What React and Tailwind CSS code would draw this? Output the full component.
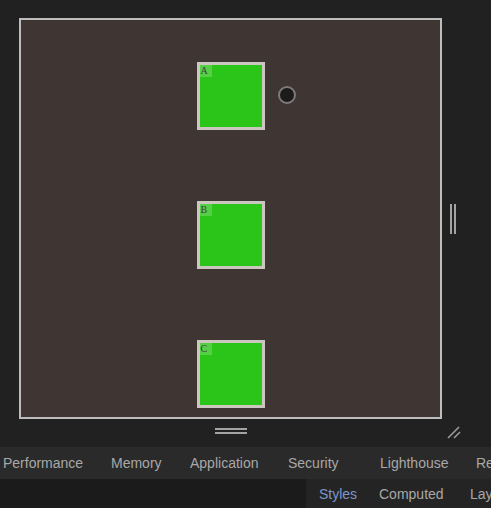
export default function App() {
  const boxes = ["A", "B", "C"]
  const tabs = [
    { label: "Performance", w: "w-[108px]" },
    { label: "Memory", w: "w-[79px]" },
    { label: "Application", w: "w-[98px]" },
    { label: "Security", w: "w-[92px]" },
    { label: "Lighthouse", w: "w-[96px]" },
    { label: "Recorder", w: "w-[90px]" },
  ]

  return (
    <div className="w-[491px] h-[508px] overflow-hidden bg-[#212121] font-['Liberation_Sans',Arial,sans-serif]">
      {/* Viewport area */}
      <div className="h-[447px] pt-[18px] pl-[19px] bg-[#212121]">
        <div className="flex">
          {/* Frame */}
          <div className="w-[423px] h-[401px] shrink-0 border-2 border-[#bdbdbd] bg-[#3f3634] flex flex-col items-center pt-[42px] gap-[71px]">
            {boxes.map((b) => (
              <div key={b} className="relative w-[68px] h-[68px] border-[3px] border-[#cbc6c0] bg-[#2bc418] shrink-0">
                <div className="w-[12px] h-[12px] bg-[rgba(255,255,255,0.2)] text-[10px] leading-[12px] text-[#3c3c3c] pl-[1px] font-['Liberation_Serif',serif]">
                  {b}
                </div>
                {b === "A" && (
                  <div className="absolute left-[78px] top-[21px] w-[18px] h-[18px] rounded-full border-2 border-[#7d7a78] bg-[#1c1a1a]"></div>
                )}
              </div>
            ))}
          </div>
          {/* Right resize handle */}
          <div className="flex-1 flex items-center">
            <div className="ml-[8px] flex gap-[2px]">
              <div className="w-[2px] h-[30px] bg-[#a3a3a3]"></div>
              <div className="w-[2px] h-[30px] bg-[#a3a3a3]"></div>
            </div>
          </div>
        </div>
        {/* Bottom handles */}
        <div className="flex items-start w-[423px] relative h-[28px]">
          <div className="flex-1 flex justify-center pt-[9px]">
            <div className="flex flex-col gap-[2px]">
              <div className="w-[32px] h-[2px] bg-[#a3a3a3]"></div>
              <div className="w-[32px] h-[2px] bg-[#a3a3a3]"></div>
            </div>
          </div>
          <svg className="absolute left-[427px] top-[5px]" width="16" height="16" viewBox="0 0 16 16">
            <line x1="2" y1="14" x2="13" y2="3" stroke="#9a9a9a" strokeWidth="1.6" />
            <line x1="8" y1="14" x2="14" y2="8" stroke="#9a9a9a" strokeWidth="1.6" />
          </svg>
        </div>
      </div>

      {/* Panel tabs */}
      <div className="h-[32px] bg-[#2a2a2a] flex items-center pl-[3px] text-[14px] text-[#a8a8a8] whitespace-nowrap overflow-hidden">
        {tabs.map((t) => (
          <div key={t.label} className={`${t.w} shrink-0`}>
            {t.label}
          </div>
        ))}
      </div>

      {/* Sub tabs */}
      <div className="flex h-[29px]">
        <div className="w-[306px] shrink-0 bg-[#1b1b1b]"></div>
        <div className="flex-1 min-w-0 overflow-hidden bg-[#242424] flex items-center pt-[2px] pl-[13px] text-[14px] whitespace-nowrap">
          <div className="w-[60px] shrink-0 text-[#7f96c9]">Styles</div>
          <div className="w-[91px] shrink-0 text-[#a8a8a8]">Computed</div>
          <div className="shrink-0 text-[#a8a8a8]">Layout</div>
        </div>
      </div>
    </div>
  )
}
